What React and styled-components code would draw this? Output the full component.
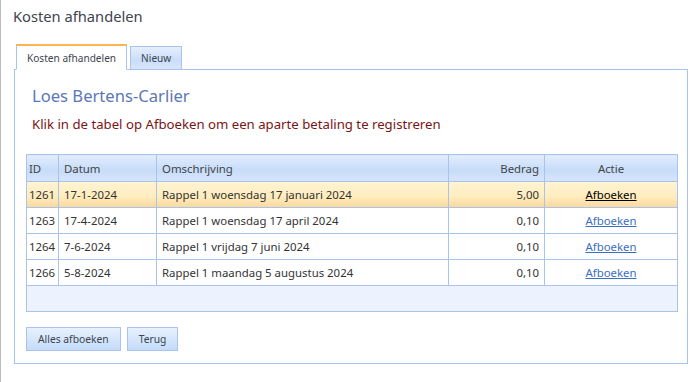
import React from "react";
import styled, { createGlobalStyle } from "styled-components";

const GlobalStyle = createGlobalStyle`
  html, body {
    margin: 0;
    padding: 0;
    background: #fff;
  }
  body {
    font-family: "Noto Sans", "Open Sans", sans-serif;
    color: #333;
  }
`;

const rows = [
  { id: 1261, datum: "17-1-2024", oms: "Rappel 1 woensdag 17 januari 2024", bedrag: "5,00", selected: true },
  { id: 1263, datum: "17-4-2024", oms: "Rappel 1 woensdag 17 april 2024", bedrag: "0,10" },
  { id: 1264, datum: "7-6-2024", oms: "Rappel 1 vrijdag 7 juni 2024", bedrag: "0,10" },
  { id: 1266, datum: "5-8-2024", oms: "Rappel 1 maandag 5 augustus 2024", bedrag: "0,10" },
];

const columns = [32, 98, 292, 96, 133];

const App = () => {
  return (
    <>
      <GlobalStyle />
      <Page>
        <Title>Kosten afhandelen</Title>
        <Tabs>
          <Tab $active>Kosten afhandelen</Tab>
          <Tab>Nieuw</Tab>
        </Tabs>
        <Panel>
          <Name>Loes Bertens-Carlier</Name>
          <Hint>Klik in de tabel op Afboeken om een aparte betaling te registreren</Hint>
          <Grid>
            <colgroup>
              {columns.map((w, i) => (
                <col key={i} style={{ width: w }} />
              ))}
            </colgroup>
            <thead>
              <tr>
                <Th $tight>ID</Th>
                <Th>Datum</Th>
                <Th>Omschrijving</Th>
                <Th $align="right">Bedrag</Th>
                <Th $align="center">Actie</Th>
              </tr>
            </thead>
            <tbody>
              {rows.map((r) => (
                <Row key={r.id} $selected={r.selected}>
                  <Td $tight>{r.id}</Td>
                  <Td>{r.datum}</Td>
                  <Td>{r.oms}</Td>
                  <Td $align="right">{r.bedrag}</Td>
                  <Td $align="center">
                    <ActionLink href="#" $selected={r.selected}>Afboeken</ActionLink>
                  </Td>
                </Row>
              ))}
              <tr>
                <Footer colSpan={5} />
              </tr>
            </tbody>
          </Grid>
          <Buttons>
            <Button>Alles afboeken</Button>
            <Button>Terug</Button>
          </Buttons>
        </Panel>
      </Page>
    </>
  );
};

export default App;

const Page = styled.div`
  border-left: 1px solid #bdbdbd;
  min-height: 382px;
  box-sizing: border-box;
  padding: 5px 6px 0 12px;
`;

const Title = styled.h1`
  margin: 0;
  font-weight: normal;
  font-size: 14.7px;
  line-height: 22px;
  color: #3d4450;
`;

const Tabs = styled.div`
  display: flex;
  gap: 3px;
  margin: 17px 0 -1px 3px;
  position: relative;
  z-index: 1;
  align-items: flex-end;
`;

const Tab = styled.div`
  font-size: 10.1px;
  line-height: 14px;
  color: #3d4450;
  box-sizing: border-box;
  border: 1px solid #a8c4ec;
  padding: ${(p) => (p.$active ? "5px 10px 4px" : "4px 10px 4px")};
  background: ${(p) =>
    p.$active ? "#fff" : "linear-gradient(#e6effc, #c9ddfa 60%, #d8e6fb)"};
  border-top: ${(p) => (p.$active ? "2px solid #ffb54d" : "1px solid #a8c4ec")};
  border-bottom: ${(p) => (p.$active ? "1px solid #fff" : "1px solid #a8c4ec")};
`;

const Panel = styled.div`
  border: 1px solid #a8c4ec;
  width: 674px;
  height: 295px;
  box-sizing: border-box;
  margin-left: 1px;
  padding: 15px 11px 0 11px;
`;

const Name = styled.h2`
  margin: 0 0 0 6px;
  font-weight: normal;
  font-size: 16.6px;
  line-height: 22px;
  color: #5b78b4;
`;

const Hint = styled.p`
  margin: 8px 0 0 6px;
  font-size: 13.2px;
  line-height: 18px;
  color: #7a1414;
`;

const Grid = styled.table`
  margin-top: 21px;
  width: 651px;
  table-layout: fixed;
  border-collapse: collapse;
  border: 1px solid #a8c4ec;
  font-size: 11.4px;
  color: #333;
`;

const Th = styled.th`
  font-weight: normal;
  text-align: ${(p) => p.$align || "left"};
  height: 26px;
  padding: ${(p) => (p.$tight ? "0 2px" : "0 5px")};
  border: 1px solid #a8c4ec;
  color: #444;
  background: linear-gradient(#e2edfd, #c7dcf9 55%, #d6e5fb);
`;

const Row = styled.tr`
  background: ${(p) =>
    p.$selected ? "linear-gradient(#fff4d2, #ffedbf 55%, #fdd79c)" : "#fff"};
`;

const Td = styled.td`
  height: 25px;
  padding: ${(p) => (p.$tight ? "0 2px" : "0 5px")};
  text-align: ${(p) => p.$align || "left"};
  border: 1px solid #a8c4ec;
  white-space: nowrap;
  overflow: hidden;
`;

const Footer = styled.td`
  height: 23px;
  background: #edf3fe;
  border: 1px solid #a8c4ec;
`;

const ActionLink = styled.a`
  color: ${(p) => (p.$selected ? "#000" : "#3a6fc4")};
  text-decoration: underline;
`;

const Buttons = styled.div`
  display: flex;
  gap: 6px;
  margin-top: 15px;
`;

const Button = styled.button`
  font-family: inherit;
  font-size: 10.3px;
  color: #3d4450;
  height: 24px;
  padding: 0 11px;
  border: 1px solid #a8c4ec;
  background: linear-gradient(#e8f1fd, #d2e4fb 60%, #c4dbfa);
  border-radius: 0;
`;
